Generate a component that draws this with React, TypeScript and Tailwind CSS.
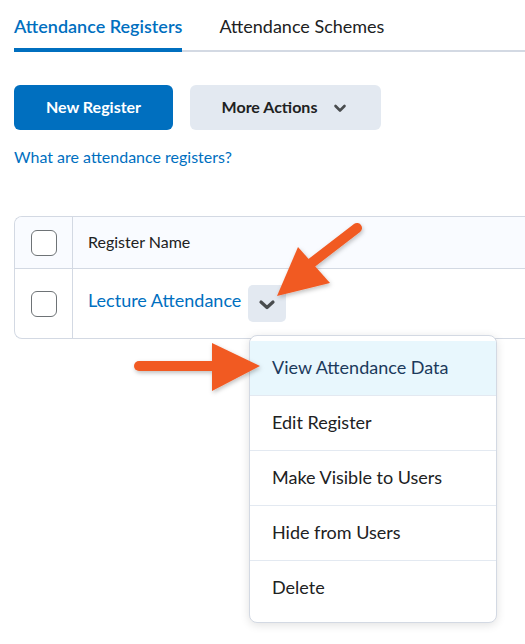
import React from "react";

const Chevron = ({ className = "" }: { className?: string }) => (
  <svg viewBox="0 0 18 18" className={className} fill="none">
    <path d="M4.5 7 L9 11.5 L13.5 7" stroke="currentColor" strokeWidth="2.6" strokeLinecap="round" strokeLinejoin="round" />
  </svg>
);

const BigChevron = ({ className = "" }: { className?: string }) => (
  <svg viewBox="0 0 20 20" className={className} fill="none">
    <path d="M4 7 L10 12.5 L16 7" stroke="currentColor" strokeWidth="3.2" strokeLinecap="round" strokeLinejoin="round" />
  </svg>
);

const Checkbox = () => (
  <div className="w-[26px] h-[26px] rounded-[6px] border border-[#6e7376] bg-white" />
);

export default function App() {
  const items = ["View Attendance Data", "Edit Register", "Make Visible to Users", "Hide from Users", "Delete"];
  return (
    <div className="relative w-[525px] h-[644px] overflow-hidden bg-white text-[#202122]" style={{ fontFamily: "Lato, 'Noto Sans', sans-serif" }}>
      <div className="pl-[14px]">
        {/* Tabs */}
        <div className="flex items-end border-b-2 border-[#d3d9e3] h-[52px]">
          <div className="relative pb-[15px] text-[18px] font-semibold text-[#006fbf] leading-none">
            Attendance Registers
            <div className="absolute left-0 right-0 -bottom-[2px] h-[4px] bg-[#006fbf]" />
          </div>
          <div className="ml-[37px] pb-[15px] text-[18px] leading-none text-[#202122]">Attendance Schemes</div>
        </div>

        {/* Buttons */}
        <div className="flex gap-[17px] mt-[33px]">
          <button className="w-[159px] h-[45px] pb-[2px] rounded-[6px] bg-[#006fbf] text-white font-bold text-[16px]">New Register</button>
          <button className="w-[191px] h-[45px] pb-[2px] rounded-[6px] bg-[#e3e9f1] text-[#202122] font-bold text-[16px] flex items-center justify-center gap-[14px]">
            More Actions
            <Chevron className="w-[18px] h-[18px] text-[#494c4e] mt-[2px]" />
          </button>
        </div>

        <div className="mt-[19px] text-[16px] text-[#006fbf] leading-none">What are attendance registers?</div>

        {/* Table */}
        <div className="mt-[51px] border border-[#d3d9e3] border-r-0 rounded-l-[8px] w-[520px] overflow-hidden">
          <div className="flex h-[52px] bg-[#f9fbff] border-b border-[#d3d9e3]">
            <div className="w-[58px] flex items-center justify-center border-r border-[#d3d9e3]">
              <Checkbox />
            </div>
            <div className="flex items-center pl-[15px] pb-[2px] text-[16px] text-[#202122]">Register Name</div>
          </div>
          <div className="flex h-[69px]">
            <div className="w-[58px] flex items-center justify-center border-r border-[#d3d9e3]">
              <Checkbox />
            </div>
            <div className="flex items-center pl-[15px]">
              <span className="text-[18px] text-[#006fbf] pb-[6px]">Lecture Attendance</span>
              <div className="ml-[7px] w-[38px] h-[37px] rounded-[5px] bg-[#e3e9f1] flex items-center justify-center">
                <BigChevron className="w-[20px] h-[20px] text-[#494c4e] mt-[3px]" />
              </div>
            </div>
          </div>
        </div>
      </div>

      {/* Dropdown menu */}
      <div className="absolute left-[249px] top-[335px] w-[248px] rounded-[8px] border border-[#d3d9e3] bg-white shadow-[0_2px_10px_rgba(0,0,0,0.12)] pt-[5px] pb-[6px] overflow-hidden">
        {items.map((t, i) => (
          <div
            key={t}
            className={
              i === 0
                ? "h-[55px] flex items-center pl-[22px] pb-[2px] text-[18px] bg-[#e8f7fd] text-[#1b3a5c] border-b border-[#e3e9f1]"
                : i === items.length - 1
                ? "h-[55px] flex items-center pl-[22px] pb-[2px] text-[18px] text-[#202122]"
                : "h-[55px] flex items-center pl-[22px] pb-[2px] text-[18px] text-[#202122] border-b border-[#e3e9f1]"
            }
          >
            {t}
          </div>
        ))}
      </div>

      {/* Annotation arrows */}
      <svg className="absolute inset-0 pointer-events-none" width="525" height="644" viewBox="0 0 525 644">
        <defs>
          <filter id="sh" x="-20%" y="-20%" width="140%" height="140%">
            <feDropShadow dx="1" dy="2" stdDeviation="2" floodColor="#000" floodOpacity="0.25" />
          </filter>
        </defs>
        <g filter="url(#sh)" fill="#f15a24" stroke="#f15a24">
          <line x1="357" y1="228" x2="305" y2="268" strokeWidth="10" strokeLinecap="round" />
          <polygon points="277,296 298,247 330,283" stroke="none" />
          <line x1="139" y1="366" x2="220" y2="366" strokeWidth="10" strokeLinecap="round" />
          <polygon points="260,366 212,343 212,391" stroke="none" />
        </g>
      </svg>
    </div>
  );
}
